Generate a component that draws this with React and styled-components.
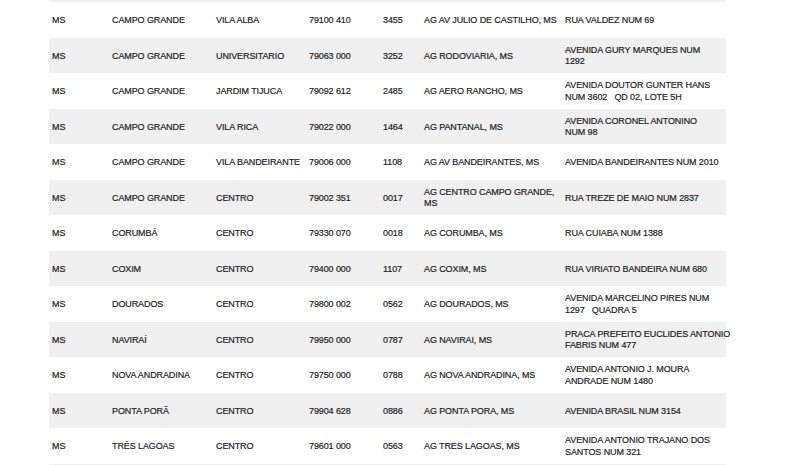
import styled, { createGlobalStyle } from "styled-components";

const GlobalStyle = createGlobalStyle`
  html, body {
    margin: 0;
    padding: 0;
    background: #ffffff;
  }
  body {
    font-family: "Liberation Sans", Arial, sans-serif;
    color: #1f1f1f;
  }
`;

const Page = styled.div`
  width: 793px;
  height: 465px;
  overflow: hidden;
  padding-left: 49px;
  box-sizing: border-box;
`;

const Table = styled.div`
  width: 677px;
  display: flex;
  flex-direction: column;
`;

const Stub = styled.div`
  height: 2px;
  background-color: #f0f0f0;
`;

const Row = styled.div`
  display: grid;
  grid-template-columns: 60px 104px 93px 74px 41px 141px 164px;
  height: 35.5px;
  flex-shrink: 0;
  background-color: ${(props) => (props.$striped ? "#f0f0f0" : "#ffffff")};
`;

const Cell = styled.div`
  display: flex;
  flex-direction: column;
  justify-content: center;
  padding-left: 3px;
  padding-top: 2px;
  font-size: 9px;
  line-height: 11.5px;
  letter-spacing: -0.1px;
  white-space: pre;
  -webkit-text-stroke: 0.2px #1f1f1f;
`;

const rows = [
  ["CAMPO GRANDE", "VILA ALBA", "79100 410", "3455", ["AG AV JULIO DE CASTILHO, MS"], ["RUA VALDEZ NUM 69"]],
  ["CAMPO GRANDE", "UNIVERSITARIO", "79063 000", "3252", ["AG RODOVIARIA, MS"], ["AVENIDA GURY MARQUES NUM", "1292"]],
  ["CAMPO GRANDE", "JARDIM TIJUCA", "79092 612", "2485", ["AG AERO RANCHO, MS"], ["AVENIDA DOUTOR GUNTER HANS", "NUM 3602   QD 02, LOTE 5H"]],
  ["CAMPO GRANDE", "VILA RICA", "79022 000", "1464", ["AG PANTANAL, MS"], ["AVENIDA CORONEL ANTONINO", "NUM 98"]],
  ["CAMPO GRANDE", "VILA BANDEIRANTE", "79006 000", "1108", ["AG AV BANDEIRANTES, MS"], ["AVENIDA BANDEIRANTES NUM 2010"]],
  ["CAMPO GRANDE", "CENTRO", "79002 351", "0017", ["AG CENTRO CAMPO GRANDE,", "MS"], ["RUA TREZE DE MAIO NUM 2837"]],
  ["CORUMBÁ", "CENTRO", "79330 070", "0018", ["AG CORUMBA, MS"], ["RUA CUIABA NUM 1388"]],
  ["COXIM", "CENTRO", "79400 000", "1107", ["AG COXIM, MS"], ["RUA VIRIATO BANDEIRA NUM 680"]],
  ["DOURADOS", "CENTRO", "79800 002", "0562", ["AG DOURADOS, MS"], ["AVENIDA MARCELINO PIRES NUM", "1297   QUADRA 5"]],
  ["NAVIRAÍ", "CENTRO", "79950 000", "0787", ["AG NAVIRAI, MS"], ["PRACA PREFEITO EUCLIDES ANTONIO", "FABRIS NUM 477"]],
  ["NOVA ANDRADINA", "CENTRO", "79750 000", "0788", ["AG NOVA ANDRADINA, MS"], ["AVENIDA ANTONIO J. MOURA", "ANDRADE NUM 1480"]],
  ["PONTA PORÃ", "CENTRO", "79904 628", "0886", ["AG PONTA PORA, MS"], ["AVENIDA BRASIL NUM 3154"]],
  ["TRÊS LAGOAS", "CENTRO", "79601 000", "0563", ["AG TRES LAGOAS, MS"], ["AVENIDA ANTONIO TRAJANO DOS", "SANTOS NUM 321"]],
];

function Lines({ lines }) {
  return lines.map((line, i) => <span key={i}>{line}</span>);
}

export default function App() {
  return (
    <>
      <GlobalStyle />
      <Page>
        <Table>
          <Stub />
          {rows.map(([city, district, cep, code, agency, address], i) => (
            <Row key={code} $striped={i % 2 === 1}>
              <Cell>MS</Cell>
              <Cell>{city}</Cell>
              <Cell>{district}</Cell>
              <Cell>{cep}</Cell>
              <Cell>{code}</Cell>
              <Cell>
                <Lines lines={agency} />
              </Cell>
              <Cell>
                <Lines lines={address} />
              </Cell>
            </Row>
          ))}
          <Row $striped />
        </Table>
      </Page>
    </>
  );
}
